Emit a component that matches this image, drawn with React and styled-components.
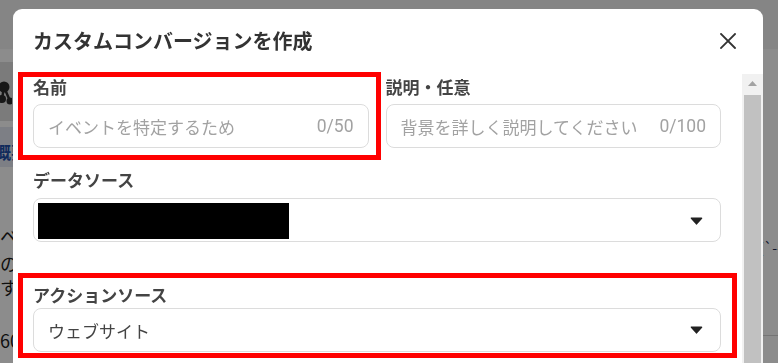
import React from "react";
import styled, { createGlobalStyle } from "styled-components";

const GlobalStyle = createGlobalStyle`
  html, body { margin: 0; padding: 0; overflow: hidden; }
  body {
    width: 778px;
    height: 363px;
    font-family: "Noto Sans CJK JP", "Noto Sans", sans-serif;
    background: #fff;
  }
  * { box-sizing: border-box; }
`;

/* ---------- underlying page ---------- */
const Page = styled.div`
  width: 778px;
  height: 363px;
  display: flex;
  flex-direction: column;
  overflow: hidden;
  background: #fff;
`;

const TopBar = styled.div`
  height: 50px;
  flex: none;
  background: #f3f3f3;
  border-bottom: 1px solid #fdfdfd;
`;

const PageBody = styled.div`
  flex: 1;
  display: flex;
`;

const SidePane = styled.div`
  width: 240px;
  display: flex;
  flex-direction: column;
  padding-top: 12px;
`;

const ToolBlock = styled.div`
  height: 59px;
  background: #e1e1e1;
  display: flex;
  align-items: center;
`;

const TabBlock = styled.div`
  height: 40px;
  margin-top: 6px;
  background: #e3e8f3;
  display: flex;
  align-items: center;
  padding-top: 8px;
`;

const TabText = styled.span`
  margin-left: -6px;
  font-size: 17px;
  font-weight: 700;
  color: #1f4fa8;
`;

const PageLines = styled.div`
  display: flex;
  flex-direction: column;
  margin-top: 56px;
`;

const PageLine = styled.span`
  font-size: 18px;
  line-height: 26px;
  color: #1c1c1c;
  margin-top: ${(p) => p.$mt || 0}px;
  white-space: nowrap;
`;

const MainPane = styled.div`
  flex: 1;
  display: flex;
  flex-direction: column;
  align-items: flex-end;
`;

const MainNote = styled.span`
  margin-top: 187px;
  margin-right: -4px;
  font-size: 14px;
  color: #1c2a55;
`;

const MainRule = styled.div`
  align-self: stretch;
  margin-top: 78px;
  border-top: 1px solid #d6d6d6;
`;

/* ---------- modal ---------- */
const Overlay = styled.div`
  position: fixed;
  inset: 0;
  background: rgba(0, 0, 0, 0.45);
  display: flex;
  align-items: flex-start;
  padding: 9px 0 0 13px;
`;

const Modal = styled.div`
  width: 750px;
  height: 420px;
  flex: none;
  background: #fff;
  border-radius: 9px;
  display: flex;
  flex-direction: column;
  overflow: hidden;
`;

const Header = styled.div`
  height: 65px;
  flex: none;
  display: flex;
  align-items: center;
  justify-content: space-between;
  padding: 0 26px 2px 20px;
`;

const Title = styled.h2`
  margin: 0;
  font-size: 20px;
  font-weight: 700;
  color: #333;
  line-height: 28px;
`;

const CloseButton = styled.button`
  border: none;
  background: none;
  padding: 0;
  width: 18px;
  height: 18px;
  display: flex;
  align-items: center;
  justify-content: center;
  cursor: pointer;
`;

const BodyWrap = styled.div`
  flex: 1;
  display: flex;
  min-height: 0;
`;

const Body = styled.div`
  flex: 1;
  padding: 1px 21px 0 20px;
  display: flex;
  flex-direction: column;
`;

const Row = styled.div`
  display: grid;
  grid-template-columns: 1fr 1fr;
  column-gap: 17px;
`;

const Field = styled.div`
  position: relative;
  display: flex;
  flex-direction: column;
  margin-top: ${(p) => p.$mt || 0}px;
`;

const Label = styled.label`
  font-size: 17px;
  font-weight: 700;
  color: #444;
  line-height: 24px;
  margin-bottom: ${(p) => (p.$mb != null ? p.$mb : 5)}px;
`;

const InputBox = styled.div`
  height: 44px;
  border: 1px solid #dcdcdc;
  border-radius: 8px;
  display: flex;
  align-items: center;
  padding: 0 14px 0 14px;
  gap: 10px;
  background: #fff;
`;

const TextInput = styled.input`
  flex: 1;
  min-width: 0;
  border: none;
  outline: none;
  padding: 0;
  font-family: inherit;
  font-size: 17px;
  color: #333;
  background: transparent;
  &::placeholder {
    color: #a2a2a2;
  }
`;

const Counter = styled.span`
  font-family: Roboto, "Noto Sans", sans-serif;
  font-size: 17.5px;
  color: #a2a2a2;
  flex: none;
`;

const SelectBox = styled.div`
  height: 44px;
  border: 1px solid #dcdcdc;
  border-radius: 8px;
  display: flex;
  align-items: ${(p) => (p.$redacted ? "stretch" : "center")};
  padding: ${(p) => (p.$redacted ? "4px 17px 2px 4px" : "0 17px 0 14px")};
  background: #fff;
`;

const SelectValue = styled.span`
  flex: 1;
  font-size: 17px;
  color: #444;
`;

const Redaction = styled.span`
  width: 251px;
  background: #000;
`;

const Spacer = styled.span`
  flex: 1;
`;

const CaretWrap = styled.span`
  display: flex;
  align-items: center;
`;

const Annotation = styled.div`
  position: absolute;
  top: ${(p) => p.$t}px;
  left: ${(p) => p.$l}px;
  right: ${(p) => p.$r}px;
  bottom: ${(p) => p.$b}px;
  border: 5px solid #ff0000;
  pointer-events: none;
`;

/* ---------- scrollbar ---------- */
const Scrollbar = styled.div`
  width: 21px;
  flex: none;
  background: #f1f1f1;
  display: flex;
  flex-direction: column;
  align-items: stretch;
`;

const ScrollArrow = styled.div`
  height: 21px;
  flex: none;
  display: flex;
  align-items: center;
  justify-content: center;
  padding-bottom: 2px;
`;

const ScrollThumb = styled.div`
  flex: 1;
  margin: 0 2px;
  background: #c1c1c1;
`;

const Caret = () => (
  <svg width="13" height="8" viewBox="0 0 13 8">
    <path
      d="M1.5 1.2 H11.5 L6.5 6.8 Z"
      fill="#222"
      stroke="#222"
      strokeWidth="1.6"
      strokeLinejoin="round"
    />
  </svg>
);

const CloseIcon = () => (
  <svg width="16" height="16" viewBox="0 0 16 16">
    <path
      d="M1 1 L15 15 M15 1 L1 15"
      stroke="#333"
      strokeWidth="1.8"
      strokeLinecap="square"
      fill="none"
    />
  </svg>
);

const Molecule = () => (
  <svg width="14" height="34" viewBox="0 0 14 34" style={{ marginLeft: -2 }}>
    <circle cx="6" cy="12" r="5.5" fill="#2b2b2b" />
    <circle cx="4" cy="24" r="4" fill="#2b2b2b" />
    <circle cx="12" cy="26" r="3.5" fill="#2b2b2b" />
    <path d="M6 12 L4 24 M6 12 L12 26" stroke="#2b2b2b" strokeWidth="2.5" />
  </svg>
);

export default function App() {
  return (
    <>
      <GlobalStyle />
      <Page>
        <TopBar />
        <PageBody>
          <SidePane>
            <ToolBlock>
              <Molecule />
            </ToolBlock>
            <TabBlock>
              <TabText>概要</TabText>
            </TabBlock>
            <PageLines>
              <PageLine>ベベ</PageLine>
              <PageLine $mt={1}>の一</PageLine>
              <PageLine $mt={-2}>すべ</PageLine>
              <PageLine $mt={27}>60日</PageLine>
            </PageLines>
          </SidePane>
          <MainPane>
            <MainNote>(`--</MainNote>
            <MainRule />
          </MainPane>
        </PageBody>
      </Page>

      <Overlay>
        <Modal role="dialog" aria-label="カスタムコンバージョンを作成">
          <Header>
            <Title>カスタムコンバージョンを作成</Title>
            <CloseButton aria-label="閉じる">
              <CloseIcon />
            </CloseButton>
          </Header>
          <BodyWrap>
            <Body>
              <Row>
                <Field>
                  <Label>名前</Label>
                  <InputBox>
                    <TextInput placeholder="イベントを特定するため" />
                    <Counter>0/50</Counter>
                  </InputBox>
                  <Annotation $t={-3} $l={-15} $r={-12} $b={-12} />
                </Field>
                <Field>
                  <Label>説明・任意</Label>
                  <InputBox>
                    <TextInput placeholder="背景を詳しく説明してください" />
                    <Counter>0/100</Counter>
                  </InputBox>
                </Field>
              </Row>
              <Field $mt={20}>
                <Label $mb={6}>データソース</Label>
                <SelectBox $redacted>
                  <Redaction />
                  <Spacer />
                  <CaretWrap>
                    <Caret />
                  </CaretWrap>
                </SelectBox>
              </Field>
              <Field $mt={41}>
                <Label $mb={1}>アクションソース</Label>
                <SelectBox>
                  <SelectValue>ウェブサイト</SelectValue>
                  <Caret />
                </SelectBox>
                <Annotation $t={-10} $l={-15} $r={-16} $b={-6} />
              </Field>
            </Body>
            <Scrollbar>
              <ScrollArrow>
                <svg width="9" height="5" viewBox="0 0 9 5">
                  <path d="M0 5 L4.5 0 L9 5 Z" fill="#a3a3a3" />
                </svg>
              </ScrollArrow>
              <ScrollThumb />
            </Scrollbar>
          </BodyWrap>
        </Modal>
      </Overlay>
    </>
  );
}
